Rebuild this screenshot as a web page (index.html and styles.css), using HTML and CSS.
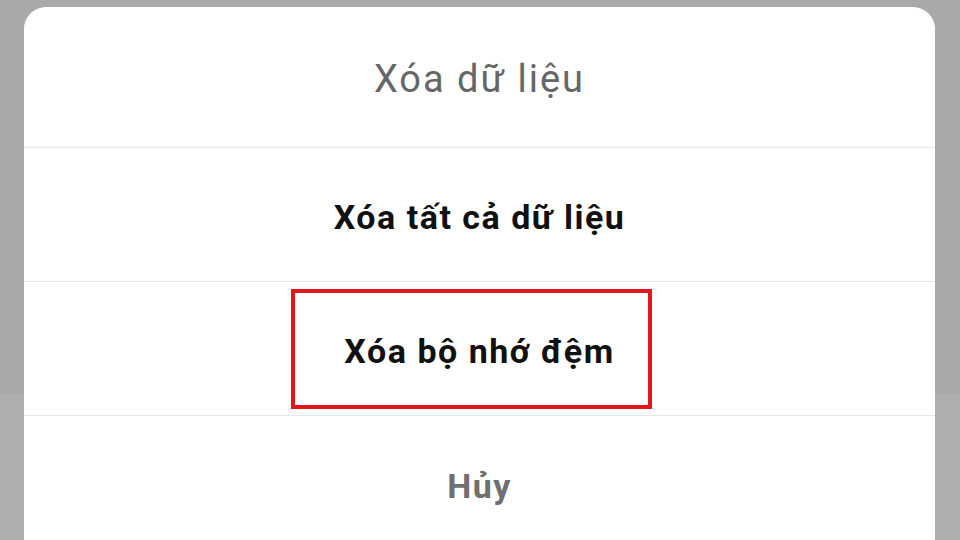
FILE: index.html
```html
<!DOCTYPE html>
<html lang="vi">
<head>
  <meta charset="UTF-8" />
  <meta name="viewport" content="width=device-width, initial-scale=1.0"/>
  <title>Xóa dữ liệu</title>
  <link rel="stylesheet" href="styles.css">
</head>
<body>
  <div class="sheet">
    <div class="title">Xóa dữ liệu</div>
    <div class="option">Xóa tất cả dữ liệu</div>
    <div class="option highlighted">
      Xóa bộ nhớ đệm
      <span class="mark"></span>
    </div>
    <div class="option cancel">Hủy</div>
  </div>
</body>
</html>
```

FILE: styles.css
```css
html, body {
  margin: 0;
  height: 100%;
  overflow: hidden;
}
body {
  background: linear-gradient(#a9a9a9 0, #a9a9a9 393px, #aeaeae 394px);
  font-family: Roboto, "Noto Sans", sans-serif;
  padding-top: 7px;
}
.sheet {
  margin-left: 24px;
  width: 911px;
  height: 560px;
  background: #fff;
  border-radius: 22px;
  display: flex;
  flex-direction: column;
}
.title {
  height: 141px;
  display: flex;
  align-items: center;
  justify-content: center;
  font-size: 38px;
  letter-spacing: 2px;
  color: #666;
  border-bottom: 1px solid #e6e6e6;
  padding-top: 4px;
  box-sizing: border-box;
}
.option {
  position: relative;
  height: 134px;
  display: flex;
  align-items: center;
  justify-content: center;
  font-size: 34px;
  letter-spacing: 1.5px;
  font-weight: bold;
  color: #111;
  border-bottom: 1px solid #e6e6e6;
  padding-top: 4px;
  box-sizing: border-box;
}
.cancel {
  color: #707070;
  border-bottom: none;
  padding-top: 6px;
}
.mark {
  position: absolute;
  left: 267px;
  top: 7px;
  width: 361px;
  height: 120px;
  border: 4px solid #e3161b;
  box-sizing: border-box;
}
```
